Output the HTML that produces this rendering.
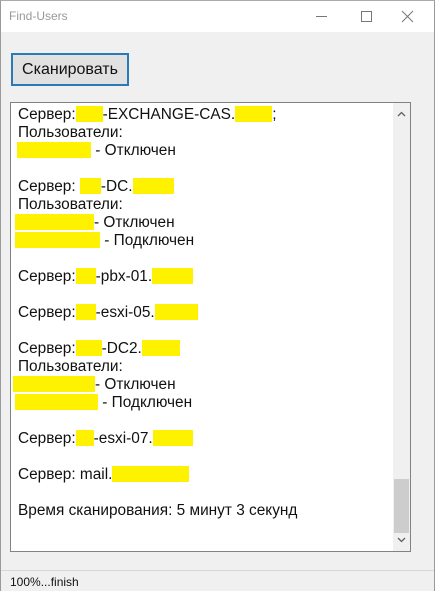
<!DOCTYPE html>
<html><head><meta charset="utf-8"><style>
*{margin:0;padding:0;box-sizing:border-box}
body{width:435px;height:591px;overflow:hidden;background:#f0f0f0;font-family:"Liberation Sans",Arial,sans-serif;position:relative}
.win{position:absolute;left:0;top:0;width:435px;height:591px;border:1px solid #9a9a9a;border-top-color:#aaa}
.title{position:absolute;left:0;top:0;width:433px;height:31px;background:#fff}
.title span{position:absolute;left:8px;top:8px;font-size:12px;color:#999}
.ctl{position:absolute;top:0;height:31px;color:#777}
.btn{position:absolute;left:10px;top:52px;width:118px;height:33px;border:2px solid #2a7ab8;background:#e1e1e1;font-size:16px;color:#111;text-align:center;line-height:29px}
.tb{position:absolute;left:9px;top:101px;width:401px;height:450px;background:#fff;border:1px solid #828282}
.sb{position:absolute;left:382px;top:0;width:17px;height:448px;background:#f0f0f0}
.thumb{position:absolute;left:1px;top:376px;width:15px;height:54px;background:#cdcdcd}
.txt{position:absolute;left:7px;top:3px;font-size:15.4px;line-height:18px;color:#111;white-space:pre}
.y{display:inline-block;background:#fff200;height:16px;vertical-align:-3px}
.status{position:absolute;left:0;top:569px;width:433px;height:21px;border-top:1px solid #d7d7d7;background:#f0f0f0}
.status span{position:absolute;left:9px;top:4px;font-size:12px;color:#111}
</style></head><body>
<div class="win">
<div class="title"><span>Find-Users</span>
<svg class="ctl" style="left:300px" width="133" height="31"><line x1="15" y1="15.5" x2="26" y2="15.5" stroke="#777"/><rect x="60.5" y="10.5" width="10" height="10" fill="none" stroke="#777"/><path d="M101 10 L112 21 M112 10 L101 21" stroke="#777"/></svg>
</div>
<div class="btn">Сканировать</div>
<div class="tb">
<div class="txt">Сервер:<span class="y" style="width:27px"></span>-EXCHANGE-CAS.<span class="y" style="width:37px"></span>;
Пользователи:
<span class="y" style="width:74px;margin-left:-1px"></span> - Отключен

Сервер: <span class="y" style="width:21px"></span>-DC.<span class="y" style="width:41px"></span>
Пользователи:
<span class="y" style="width:79px;margin-left:-3px"></span>- Отключен
<span class="y" style="width:85px;margin-left:-3px"></span> - Подключен

Сервер:<span class="y" style="width:20px"></span>-pbx-01.<span class="y" style="width:41px"></span>

Сервер:<span class="y" style="width:20px"></span>-esxi-05.<span class="y" style="width:43px"></span>

Сервер:<span class="y" style="width:26px"></span>-DC2.<span class="y" style="width:38px"></span>
Пользователи:
<span class="y" style="width:82px;margin-left:-5px"></span>- Отключен
<span class="y" style="width:83px;margin-left:-3px"></span> - Подключен

Сервер:<span class="y" style="width:18px"></span>-esxi-07.<span class="y" style="width:40px"></span>

Сервер: mail.<span class="y" style="width:77px"></span>

Время сканирования: 5 минут 3 секунд</div>
<div class="sb"><svg width="17" height="448" style="position:absolute;left:0;top:0"><path d="M5 13 L8.5 9.5 L12 13" fill="none" stroke="#606060" stroke-width="1.3"/><path d="M5 435 L8.5 438.5 L12 435" fill="none" stroke="#606060" stroke-width="1.3"/></svg><div class="thumb"></div></div>
</div>
<div class="status"><span>100%...finish</span></div>
</div>
</body></html>
